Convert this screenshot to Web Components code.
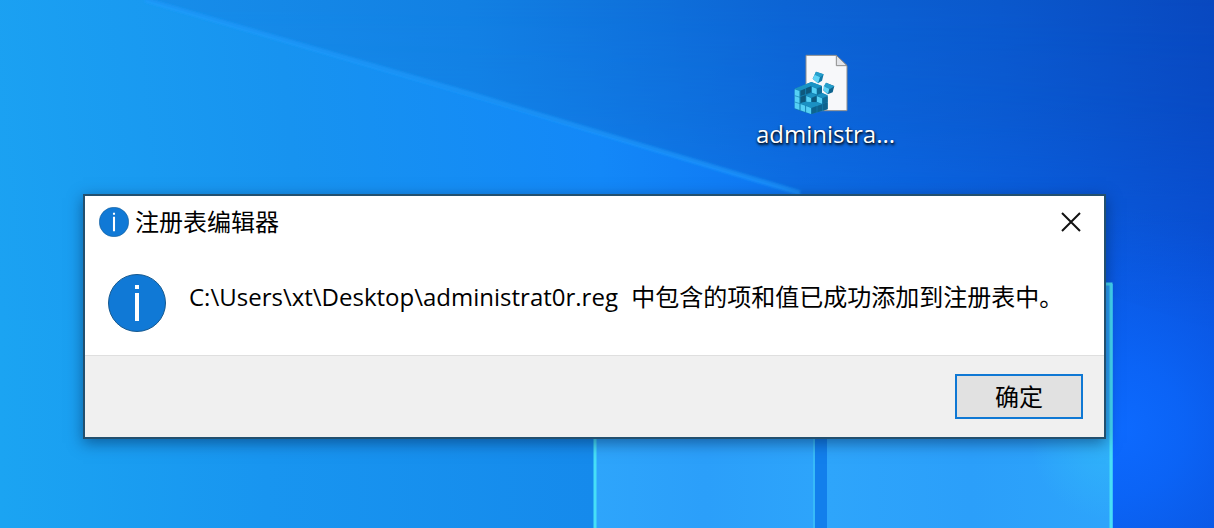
<!DOCTYPE html>
<html lang="zh-CN">
<head>
<meta charset="utf-8">
<title>注册表编辑器</title>
<style>
body { margin: 0; font-family: "Open Sans", "Noto Sans CJK SC", sans-serif; }
.path { margin-right: 7px; }
</style>
</head>
<body>
<win-desktop>
  <desktop-file label="administra..."></desktop-file>
  <message-dialog heading="注册表编辑器" action="确定"><span class="path">C:\Users\xt\Desktop\administrat0r.reg</span> 中包含的项和值已成功添加到注册表中。</message-dialog>
</win-desktop>
<script>
class WinDesktop extends HTMLElement {
  constructor() {
    super();
    this.attachShadow({ mode: 'open' }).innerHTML = `
<style>
:host { display: block; position: relative; min-height: 100vh; box-sizing: border-box; overflow: hidden; padding: 194px 108px 0 83px; background: #1590f0; }
.wallpaper { position: absolute; inset: 0; width: 100%; height: 100%; }
</style>
<svg class="wallpaper" viewBox="0 0 1214 528" preserveAspectRatio="none" aria-hidden="true">
  <defs>
    <linearGradient id="base" gradientUnits="userSpaceOnUse" x1="0" y1="300" x2="1214" y2="180">
      <stop offset="0" stop-color="#1ba2f2"/><stop offset=".25" stop-color="#1793f0"/><stop offset=".5" stop-color="#1388f8"/><stop offset=".75" stop-color="#0b6bf0"/><stop offset="1" stop-color="#0a52dc"/>
    </linearGradient>
    <linearGradient id="upper" gradientUnits="userSpaceOnUse" x1="145" y1="60" x2="1214" y2="0">
      <stop offset="0" stop-color="#178eea"/><stop offset=".3" stop-color="#1280e3"/><stop offset=".6" stop-color="#0c64d4"/><stop offset=".8" stop-color="#0a58cc"/><stop offset="1" stop-color="#0848bf"/>
    </linearGradient>
    <linearGradient id="fade" x1="0" y1="0" x2="0" y2="1">
      <stop offset="0" stop-color="#fff"/><stop offset=".35" stop-color="#fff" stop-opacity=".8"/><stop offset="1" stop-color="#fff" stop-opacity="0"/>
    </linearGradient>
    <mask id="fadeMask"><rect width="1214" height="330" fill="url(#fade)"/></mask>
    <linearGradient id="lower" x1="0" y1="0" x2="1" y2="0">
      <stop offset="0" stop-color="#1ba4f2"/><stop offset=".45" stop-color="#1895f0"/><stop offset="1" stop-color="#158aec"/>
    </linearGradient>
    <radialGradient id="glow" gradientUnits="userSpaceOnUse" cx="1120" cy="430" r="220">
      <stop offset="0" stop-color="#0d6aff"/><stop offset=".3" stop-color="#0b66fb" stop-opacity=".8"/><stop offset="1" stop-color="#0a58e8" stop-opacity="0"/>
    </radialGradient>
    <linearGradient id="pane" x1="0" y1="0" x2="1" y2="0">
      <stop offset="0" stop-color="#2ea5fb"/><stop offset=".5" stop-color="#2b9ffa"/><stop offset="1" stop-color="#2da4fb"/>
    </linearGradient>
    <radialGradient id="corner" gradientUnits="userSpaceOnUse" cx="1110" cy="440" r="80">
      <stop offset="0" stop-color="#30b4fa"/><stop offset="1" stop-color="#30b4fa" stop-opacity="0"/>
    </radialGradient>
    <filter id="soft" x="-10%" y="-10%" width="120%" height="120%"><feGaussianBlur stdDeviation="1"/></filter>
  </defs>
  <rect width="1214" height="528" fill="url(#base)"/>
  <rect y="320" width="594" height="208" fill="url(#lower)"/>
  <path d="M145 0L800 193L1214 330V0Z" fill="url(#upper)" mask="url(#fadeMask)"/>
  <rect x="900" y="180" width="314" height="348" fill="url(#glow)"/>
  <path d="M145 0L470 94L800 193" fill="none" stroke="#1d9cff" stroke-opacity=".6" stroke-width="5" filter="url(#soft)"/>
  <rect x="594" y="284" width="222" height="244" fill="url(#pane)"/>
  <rect x="815" y="284" width="13" height="244" fill="#127fec"/>
  <rect x="827" y="284" width="286" height="244" fill="url(#pane)"/>
  <rect x="1000" y="350" width="112" height="178" fill="url(#corner)"/>
  <path d="M595 528V284M1111 528V284H827" fill="none" stroke="#47dff7" stroke-width="3"/>
  <path d="M814 528V284" stroke="#38baf8" stroke-width="2"/>
</svg>
<slot></slot>`;
  }
}
customElements.define('win-desktop', WinDesktop);

class DesktopFile extends HTMLElement {
  constructor() {
    super();
    this.attachShadow({ mode: 'open' }).innerHTML = `
<style>
:host { position: absolute; left: 68%; transform: translateX(-50%); top: 54px; width: 152px; display: flex; flex-direction: column; align-items: center; color: #fff; font-size: 24px; line-height: 36px; text-shadow: 1px 2px 3px rgba(0,0,0,.85), 0 1px 2px rgba(0,0,0,.7); }
svg { width: 56px; height: 62px; margin-right: 10px; }
span { white-space: nowrap; }
</style>
<svg viewBox="160 42 168 186" aria-hidden="true">
  <path d="M199 46H290L322 77V212H199Z" fill="#f7f8fa" stroke="#8c8c8c" stroke-width="3"/>
  <path d="M290 46V77H322Z" fill="#e2e4e8" stroke="#8c8c8c" stroke-width="3"/>
  <path d="M165 146L215 126L247 138V158L264 166V208L215 223L165 207Z" fill="#137fb0"/>
  <path d="M165 146L215 126L247 138L231 145L215 138L181 152Z" fill="#1a93c4"/>
  <path d="M165 148L180 153V210L165 205Z" fill="#55d0f5"/>
  <path d="M182 152L197 146V163L182 168ZM199 145L214 139V157L199 163Z" fill="#0e587d"/>
  <path d="M182 171L198 165V185L182 189Z" fill="#0e587d"/>
  <path d="M217 140L231 146V163L217 158Z" fill="#55d0f5"/><path d="M232 146L247 140V158L232 164Z" fill="#0f6a96"/>
  <path d="M200 166L215 160L230 166L215 173Z" fill="#1b91c3"/>
  <path d="M200 168L214 174V190L200 185Z" fill="#55d0f5"/><path d="M216 174L230 168V185L216 190Z" fill="#0e587d"/>
  <path d="M232 166L248 160L264 167L248 174Z" fill="#1b91c3"/>
  <path d="M232 169L247 175V191L232 186Z" fill="#55d0f5"/><path d="M249 175L264 169V186L249 191Z" fill="#0f6a96"/>
  <path d="M182 190L198 185L231 187L248 193L215 204Z" fill="#1b91c3"/>
  <path d="M182 192L197 197V216L182 211ZM199 198L214 204V222L199 217Z" fill="#55d0f5"/>
  <path d="M216 204L231 198V217L216 222ZM233 198L247 193V212L233 217ZM249 192L264 187V207L249 212Z" fill="#0e638e"/>
  <path d="M165 167L181 172M165 186L181 191M181 152V211M198 145V163M198 196V217" stroke="#137fb0" stroke-width="2"/>
  <path d="M229 95L252 103L247 122L235 130L219 116Z" fill="#0f78a8"/>
  <path d="M229 95L252 103L243 111L225 104Z" fill="#249fcc"/><path d="M225 104L241 111L235 130L219 116Z" fill="#60d4f6"/>
  <path d="M259 128L284 138L279 157L264 163L251 151Z" fill="#0e638e"/>
  <path d="M259 128L284 139L271 147L252 139Z" fill="#249fcc"/><path d="M252 139L269 146L265 162L251 151Z" fill="#60d4f6"/>
</svg>
<span></span>`;
  }
  connectedCallback() {
    this.shadowRoot.querySelector('span').textContent = this.getAttribute('label');
  }
}
customElements.define('desktop-file', DesktopFile);

class InfoIcon extends HTMLElement {
  constructor() {
    super();
    this.attachShadow({ mode: 'open' }).innerHTML = `
<style>
:host { display: block; flex: none; width: var(--size); height: var(--size); }
svg { display: block; width: 100%; height: 100%; }
</style>
<svg viewBox="0 0 58 58" aria-hidden="true">
  <circle cx="29" cy="29" r="28.5" fill="#1079d6" stroke="#17598f"/>
  <path d="M27 11h4v4h-4zM27 19h4v28h-4z" fill="#fff"/>
</svg>`;
  }
}
customElements.define('info-icon', InfoIcon);

class MessageDialog extends HTMLElement {
  constructor() {
    super();
    this.attachShadow({ mode: 'open' }).innerHTML = `
<style>
:host { display: block; position: relative; background: #fff; border: 2px solid #23506f; box-shadow: 0 4px 14px rgba(0,30,70,.5); color: #000; font-size: 24px; line-height: 32px; }
header { display: flex; align-items: center; gap: 6px; height: 52px; padding-left: 14px; }
header info-icon { --size: 30px; }
h1 { flex: 1; margin: 0; font: inherit; }
button { font: inherit; color: inherit; margin: 0; padding: 0; }
.close { display: grid; place-items: center; width: 66px; height: 52px; border: 0; background: none; }
.close svg { width: 20px; height: 20px; }
.body { display: flex; align-items: flex-start; gap: 23px; padding: 26px 23px 23px; }
.body info-icon { --size: 58px; }
p { margin: 0; padding-top: 7px; }
footer { display: flex; justify-content: flex-end; padding: 18px 21px; background: #f0f0f0; border-top: 1px solid #dfdfdf; }
.ok { width: 128px; height: 45px; border: 2px solid #0f78d4; background: #e1e1e1; }
</style>
<header>
  <info-icon></info-icon>
  <h1></h1>
  <button class="close" type="button" aria-label="关闭"><svg viewBox="0 0 20 20"><path d="M1 1L19 19M19 1L1 19" stroke="#111" stroke-width="2" fill="none"/></svg></button>
</header>
<div class="body"><info-icon></info-icon><p><slot></slot></p></div>
<footer><button class="ok" type="button"></button></footer>`;
  }
  connectedCallback() {
    this.setAttribute('role', 'dialog');
    this.shadowRoot.querySelector('h1').textContent = this.getAttribute('heading');
    this.shadowRoot.querySelector('.ok').textContent = this.getAttribute('action');
  }
}
customElements.define('message-dialog', MessageDialog);
</script>
</body>
</html>
